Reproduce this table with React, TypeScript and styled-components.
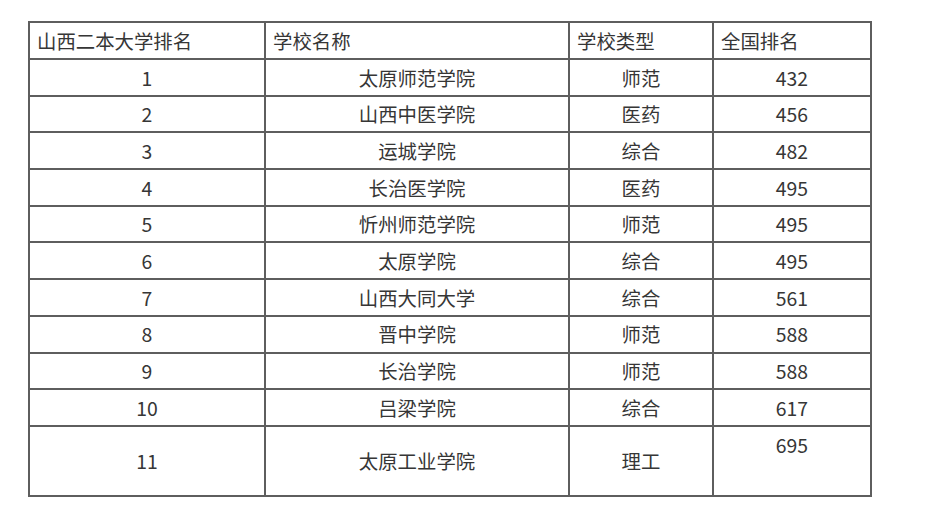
import React from "react";
import styled, { createGlobalStyle } from "styled-components";

const GlobalStyle = createGlobalStyle`
  html, body {
    margin: 0;
    padding: 0;
    background: #ffffff;
  }
  body {
    font-family: "Noto Sans CJK SC", "Noto Sans", "Liberation Sans", sans-serif;
    color: #363636;
  }
`;

const Page = styled.div`
  padding: 21px 0 0 28px;
`;

const Table = styled.table`
  border-collapse: collapse;
  table-layout: fixed;
  width: 842px;
  border: 2px solid #5e5e5e;
  font-size: 19.4px;
  line-height: 1;
`;

const HeadCell = styled.th`
  border: 2px solid #5e5e5e;
  height: 35px;
  padding: 0 6px 0 7px;
  text-align: left;
  font-weight: 400;
  vertical-align: middle;
  white-space: nowrap;
`;

const Row = styled.tr<{ $tall?: boolean }>`
  height: ${(p) => (p.$tall ? "70px" : "36.7px")};
`;

const Cell = styled.td<{ $top?: boolean }>`
  border: 2px solid #5e5e5e;
  padding: ${(p) => (p.$top ? "8px 0 0" : "0")};
  text-align: center;
  vertical-align: ${(p) => (p.$top ? "top" : "middle")};
  white-space: nowrap;
`;

type School = { rank: number; name: string; kind: string; national: number };

const schools: School[] = [
  { rank: 1, name: "太原师范学院", kind: "师范", national: 432 },
  { rank: 2, name: "山西中医学院", kind: "医药", national: 456 },
  { rank: 3, name: "运城学院", kind: "综合", national: 482 },
  { rank: 4, name: "长治医学院", kind: "医药", national: 495 },
  { rank: 5, name: "忻州师范学院", kind: "师范", national: 495 },
  { rank: 6, name: "太原学院", kind: "综合", national: 495 },
  { rank: 7, name: "山西大同大学", kind: "综合", national: 561 },
  { rank: 8, name: "晋中学院", kind: "师范", national: 588 },
  { rank: 9, name: "长治学院", kind: "师范", national: 588 },
  { rank: 10, name: "吕梁学院", kind: "综合", national: 617 },
  { rank: 11, name: "太原工业学院", kind: "理工", national: 695 },
];

export default function App() {
  return (
    <>
      <GlobalStyle />
      <Page>
        <Table>
          <colgroup>
            <col style={{ width: 236 }} />
            <col style={{ width: 304 }} />
            <col style={{ width: 144 }} />
            <col style={{ width: 158 }} />
          </colgroup>
          <thead>
            <tr>
              <HeadCell>山西二本大学排名</HeadCell>
              <HeadCell>学校名称</HeadCell>
              <HeadCell>学校类型</HeadCell>
              <HeadCell>全国排名</HeadCell>
            </tr>
          </thead>
          <tbody>
            {schools.map((s, i) => {
              const last = i === schools.length - 1;
              return (
                <Row key={s.rank} $tall={last}>
                  <Cell>{s.rank}</Cell>
                  <Cell>{s.name}</Cell>
                  <Cell>{s.kind}</Cell>
                  <Cell $top={last}>{s.national}</Cell>
                </Row>
              );
            })}
          </tbody>
        </Table>
      </Page>
    </>
  );
}
